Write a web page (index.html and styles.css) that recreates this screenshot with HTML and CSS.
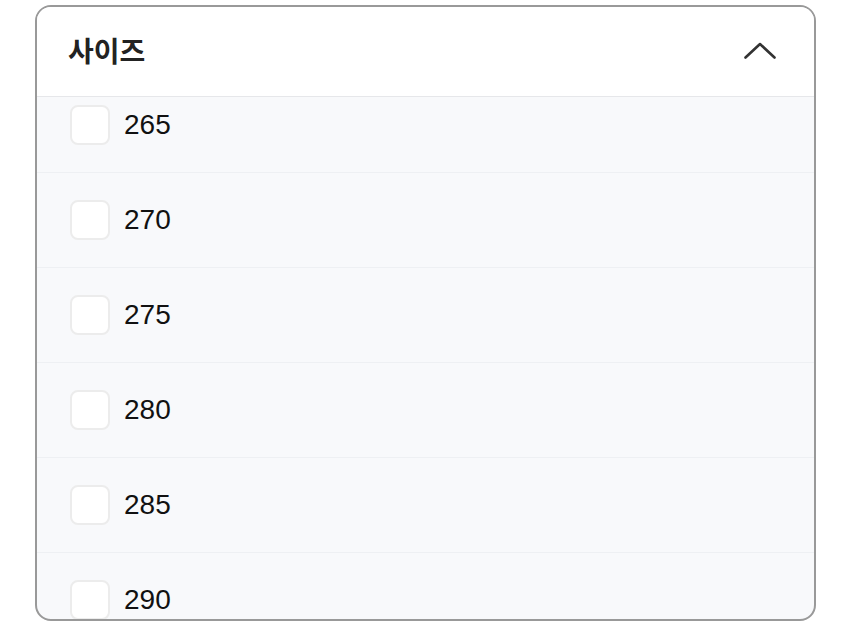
FILE: index.html
```html
<!DOCTYPE html>
<html>
  <head>
    <title>사이즈 필터</title>
    <meta name="viewport" content="width=device-width, initial-scale=1" />
    <link rel="stylesheet" href="styles.css">
  </head>
  <body>
    <section class="filter">
      <div class="filter-head">
        <h2 class="filter-title">사이즈</h2>
        <svg class="chevron" width="34" height="18" viewBox="0 0 34 18">
          <path d="M2.5 15.5 L17 2 L31.5 15.5" fill="none" stroke="#333" stroke-width="2.6" stroke-linecap="round" stroke-linejoin="round" />
        </svg>
      </div>
      <ul class="options">
        <li class="option"><span class="box"></span><span class="label">265</span></li>
        <li class="option"><span class="box"></span><span class="label">270</span></li>
        <li class="option"><span class="box"></span><span class="label">275</span></li>
        <li class="option"><span class="box"></span><span class="label">280</span></li>
        <li class="option"><span class="box"></span><span class="label">285</span></li>
        <li class="option"><span class="box"></span><span class="label">290</span></li>
      </ul>
    </section>
  </body>
</html>
```

FILE: styles.css
```css
body {
  margin: 0;
  padding: 5px 34px 0 35px;
  background-color: #fff;
  font-family: "Liberation Sans", "Noto Sans CJK KR", sans-serif;
  color: #111;
}

.filter {
  height: 616px;
  box-sizing: border-box;
  border: 2px solid #999;
  border-radius: 16px;
  overflow: hidden;
  background-color: #f8f9fb;
  display: flex;
  flex-direction: column;
}

.filter-head {
  flex: none;
  height: 90px;
  box-sizing: border-box;
  display: flex;
  align-items: center;
  justify-content: space-between;
  padding: 0 37px 4px 31px;
  background-color: #fff;
  border-bottom: 1px solid #e6e7ea;
}

.filter-title {
  margin: 0;
  font-family: "Noto Sans CJK KR", sans-serif;
  font-size: 28px;
  font-weight: 600;
  color: #222;
}

.chevron {
  margin-top: 2px;
}

.options {
  list-style: none;
  margin: -19px 0 0;
  padding: 0;
}

.option {
  height: 95px;
  box-sizing: border-box;
  display: flex;
  align-items: center;
  gap: 14px;
  padding-left: 33px;
  border-bottom: 1px solid #eef0f3;
}

.box {
  width: 40px;
  height: 40px;
  box-sizing: border-box;
  border: 2px solid #ececec;
  border-radius: 8px;
  background-color: #fff;
}

.label {
  font-size: 28px;
  color: #111;
}
```
